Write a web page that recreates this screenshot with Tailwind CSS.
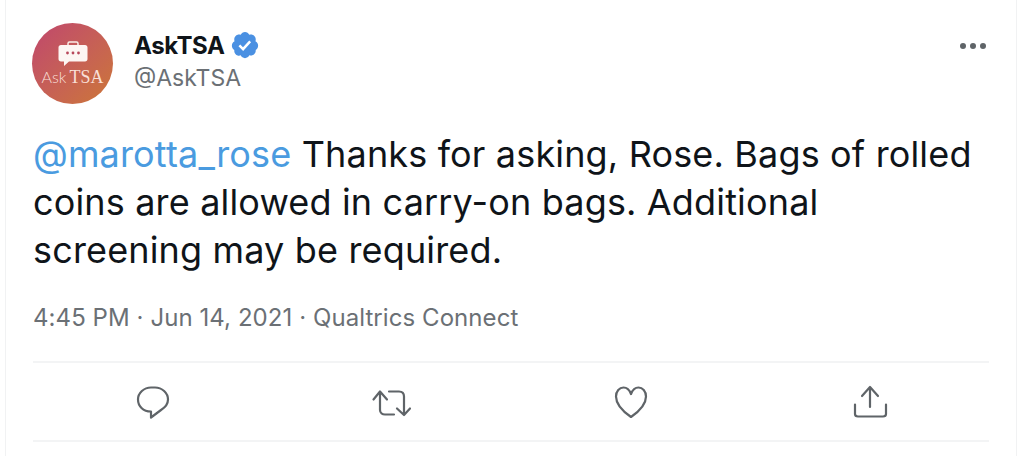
<!DOCTYPE html>
<html>
<head>
  <title>AskTSA</title>
  <script src="https://cdn.jsdelivr.net/npm/@tailwindcss/browser@4"></script>
</head>
<body class="bg-white font-['Inter',sans-serif] overflow-hidden">
  <main class="mx-[5px] w-[1012px] h-[456px] border-x border-[#f1f2f3] px-[27px] pt-[23px] flex flex-col">
    <!-- header -->
    <header class="flex items-start h-[82px]">
      <div class="w-[81px] h-[81px] -ml-[1px] rounded-full bg-linear-to-br from-[#c0466c] to-[#cc7634] flex flex-col items-center shrink-0">
        <svg class="mt-[17px]" width="32" height="30" viewBox="0 0 32 30">
          <path d="M11 6V3.500C11 2.500 11.700 2 12.500 2H19.500C20.300 2 21 2.500 21 3.500V6" fill="none" stroke="#fbeee8" stroke-width="1.500"/>
          <path d="M4 5H28C29.500 5 30.500 6 30.500 7.500V19C30.500 20.500 29.500 21.500 28 21.500H12L7 26V21.500H4C2.500 21.500 1.500 20.500 1.500 19V7.500C1.500 6 2.500 5 4 5Z" fill="#fdf6f3"/>
          <circle cx="10.500" cy="13" r="1.400" fill="#b8475a"/>
          <circle cx="16" cy="13" r="1.400" fill="#b8475a"/>
          <circle cx="21.500" cy="13" r="1.400" fill="#b8475a"/>
        </svg>
        <div class="-mt-[3px] flex items-baseline text-[18px] leading-[20px] text-[#f8dfd6] font-['Liberation_Serif',serif] whitespace-nowrap"><span class="font-['Lato',sans-serif] font-light text-[16px]">Ask</span><span class="ml-[3px]">TSA</span></div>
      </div>
      <div class="ml-[21px] flex-1 pt-[7px]">
        <div class="flex items-center h-[31px]">
          <span class="text-[24px] font-bold text-[#0f1419] tracking-[-0.4px]">AskTSA</span>
          <svg class="ml-[5px] -mt-[2px]" width="30" height="30" viewBox="0 0 24 24">
            <path fill="#4a90e2" d="M22.500 12.500c0-1.580-.875-2.950-2.148-3.600.154-.435.238-.905.238-1.400 0-2.210-1.710-3.998-3.818-3.998-.47 0-.92.084-1.336.25C14.818 2.415 13.510 1.500 12 1.500s-2.816.917-3.437 2.250c-.415-.165-.866-.25-1.336-.25-2.110 0-3.818 1.790-3.818 4 0 .494.083.964.237 1.400-1.272.65-2.147 2.018-2.147 3.600 0 1.495.782 2.798 1.942 3.486-.02.17-.032.34-.032.514 0 2.210 1.708 4 3.818 4 .47 0 .92-.086 1.335-.25.620 1.334 1.926 2.250 3.437 2.250 1.512 0 2.818-.916 3.437-2.250.415.163.865.248 1.336.248 2.110 0 3.818-1.790 3.818-4 0-.174-.012-.344-.033-.513 1.158-.687 1.943-1.990 1.943-3.484z"/>
            <path fill="#fff" d="M10.500 16.700l-3.700-3.700 1.400-1.400 2.200 2.200 5-5.400 1.450 1.350z"/>
          </svg>
        </div>
        <div class="text-[23px] leading-[28px] text-[#6b7075] mt-[3px]">@AskTSA</div>
      </div>
      <div class="flex gap-[4px] mt-[20px] mr-[3px]">
        <span class="w-[6px] h-[6px] rounded-full bg-[#5f6468]"></span>
        <span class="w-[6px] h-[6px] rounded-full bg-[#5f6468]"></span>
        <span class="w-[6px] h-[6px] rounded-full bg-[#5f6468]"></span>
      </div>
    </header>

    <!-- tweet body -->
    <p class="mt-[25px] text-[36px] leading-[48px] text-[#0f1419] tracking-[0.16px] whitespace-nowrap">
      <span class="text-[#4a9be0]">@marotta_rose</span> Thanks for asking, Rose. Bags of rolled<br>
      coins are allowed in carry-on bags. Additional<br>
      screening may be required.
    </p>

    <div class="mt-[29px] text-[24px] leading-[30px] text-[#6b7075] tracking-[0.07px]">4:45 PM · Jun 14, 2021 · Qualtrics Connect</div>

    <!-- actions -->
    <div class="mt-[28px] h-[81px] border-y-2 border-[#f3f4f5] flex items-center justify-around">
      <svg width="36" height="36" viewBox="0 0 36 36" fill="none" stroke="#5f6468" stroke-width="2.200" stroke-linejoin="round"><path d="M16 27.500C8 27.500 3 22 3 15.500C3 9 9 3.500 16 3.500H20C27 3.500 33 9 33 15.500C33 20 30 23.500 26 26L16 33.500Z"/></svg>
      <svg class="-ml-[4px]" width="42" height="36" viewBox="0 0 42 36" fill="none" stroke="#5f6468" stroke-width="2.200" stroke-linecap="round" stroke-linejoin="round"><path d="M3.500 15.500L10 7.500L17 15.500M10 8V26C10 29 12.500 30.500 15 30.500H24M19 7.500H29C32 7.500 34 9.500 34 12.500V30.500M27 24.500L34 31L40 24.500"/></svg>
      <svg class="-ml-[2px]" width="36" height="36" viewBox="0 0 36 36" fill="none" stroke="#5f6468" stroke-width="2.200" stroke-linejoin="round"><path d="M18 33C10 27.500 3 21 3 12.500C3 7 6.500 3.500 10.500 3.500C14 3.500 16.500 6 18 10C19.500 6 22 3.500 25.500 3.500C29.500 3.500 33 7 33 12.500C33 21 26 27.500 18 33Z"/></svg>
      <svg class="-mt-[1px]" width="36" height="36" viewBox="0 0 36 36" fill="none" stroke="#5f6468" stroke-width="2.200" stroke-linecap="round" stroke-linejoin="round"><path d="M18 4V24M10 13L18 4L26 13M3 21.500V31C3 32.500 4 33.500 6 33.500H31C33 33.500 34 32.500 34 31V21.500"/></svg>
    </div>
  </main>
</body>
</html>
